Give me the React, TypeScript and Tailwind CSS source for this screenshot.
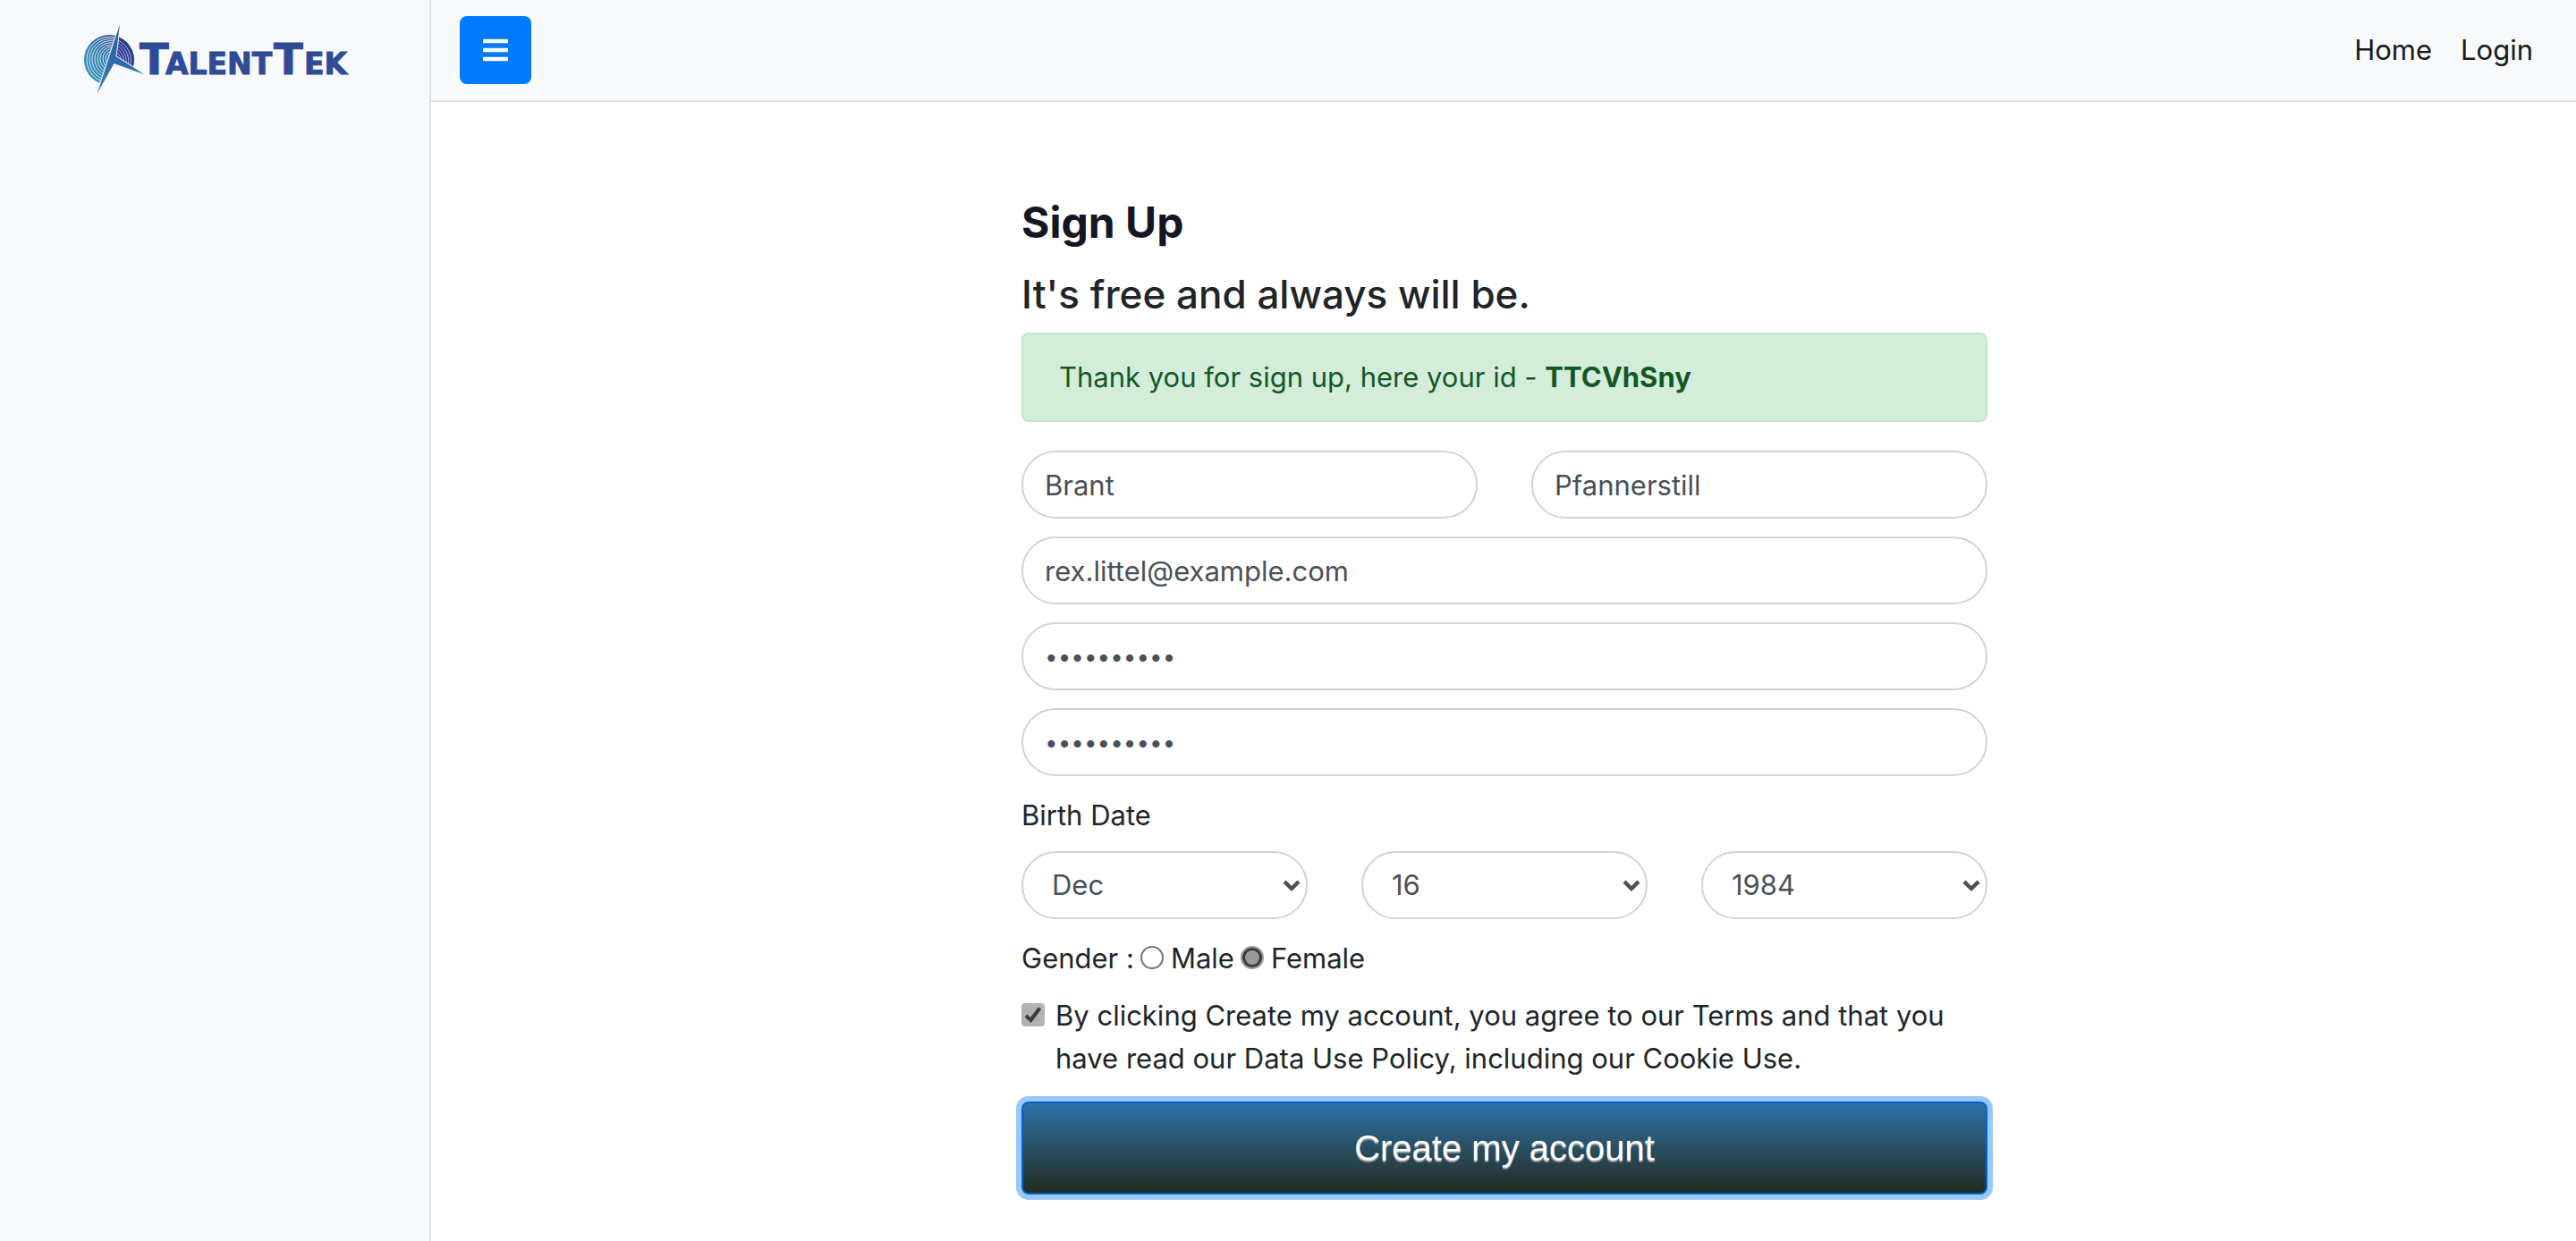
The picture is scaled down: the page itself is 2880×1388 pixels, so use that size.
import type { ReactNode } from "react";
import { FaBars } from "react-icons/fa";

const rings = Array.from({ length: 10 }, (_, i) => i + 1);

function Logo() {
  return (
    <svg viewBox="0 0 297 76" className="h-[76px] w-[297px]" role="img" aria-label="TalentTek">
      <defs>
        <linearGradient id="globe" gradientUnits="userSpaceOnUse" x1="0" y1="60" x2="52" y2="20">
          <stop offset="0" stopColor="#2f9cc0" />
          <stop offset="0.55" stopColor="#2f74ad" />
          <stop offset="1" stopColor="#2b3990" />
        </linearGradient>
        <linearGradient id="needle" gradientUnits="userSpaceOnUse" x1="14" y1="76" x2="44" y2="20">
          <stop offset="0" stopColor="#2f93bd" />
          <stop offset="0.5" stopColor="#2d6fae" />
          <stop offset="1" stopColor="#2e5fa3" />
        </linearGradient>
        <clipPath id="left">
          <path d="M0 0 H38 L29 35 L16 68 H0 Z" />
        </clipPath>
        <clipPath id="right">
          <path d="M39 0 L35 36 L56 48 H70 V0 Z" />
        </clipPath>
      </defs>
      <g clipPath="url(#left)">
        <circle cx="28" cy="39" r="28" fill="url(#globe)" />
        {rings.map((n) => (
          <circle key={n} cx={28 + n * 0.6} cy={39 - n * 0.2} r={28 - n * 2.4} fill="none" stroke="#f8f9fb" strokeOpacity="0.9" strokeWidth="1" />
        ))}
      </g>
      <g clipPath="url(#right)">
        <circle cx="28" cy="39" r="28" fill="#2b3990" />
        {rings.map((n) => (
          <circle key={n} cx={28 - n * 0.4} cy={39 + n * 0.6} r={27 - n * 2.2} fill="none" stroke="#f8f9fb" strokeOpacity="0.7" strokeWidth="0.9" />
        ))}
      </g>
      <path
        d="M40 -1 L35.500 35 L67 55 L33.5 43 L14.500 77 L28 36 Z"
        fill="url(#needle)"
        stroke="#f8f9fb"
        strokeWidth="2"
        paintOrder="stroke"
      />
      <g fill="#2f4a97" stroke="#2f4a97" strokeWidth="1" className="font-['DejaVu_Sans'] font-bold">
        <text y="55" className="text-[48px]">
          <tspan x="62">T</tspan>
          <tspan x="212">T</tspan>
        </text>
        <text y="55" className="text-[33px]">
          <tspan x="91">ALENT</tspan>
          <tspan x="246">EK</tspan>
        </text>
      </g>
    </svg>
  );
}

function Field({ label, type = "text", value }: { label: string; type?: string; value: string }) {
  return (
    <input
      className="h-[76px] w-full rounded-full border-2 border-[#ced4da] bg-white px-6 text-[31px] leading-[48px] text-[#495057] outline-none [&[type=password]]:text-[26px]"
      type={type}
      aria-label={label}
      defaultValue={value}
    />
  );
}

function Picker({ label, options, value }: { label: string; options: string[]; value: string }) {
  return (
    <div className="relative">
      <select
        aria-label={label}
        defaultValue={value}
        className="h-[76px] w-full appearance-none rounded-full border-2 border-[#ced4da] bg-white px-8 text-[31px] leading-[48px] text-[#495057] outline-none"
      >
        {options.map((o) => (
          <option key={o}>{o}</option>
        ))}
      </select>
      <svg viewBox="0 0 20 14" className="pointer-events-none absolute top-8 right-2 h-[14px] w-5" fill="none" stroke="#495057" strokeWidth="4.4">
        <path d="M2 2 L10 10 L18 2" />
      </svg>
    </div>
  );
}

function Gender({ children, checked }: { children: ReactNode; checked?: boolean }) {
  return (
    <label className="flex items-center gap-2">
      <input
        type="radio"
        name="gender"
        defaultChecked={checked}
        className="mb-0.5 size-[26px] appearance-none rounded-full border-2 border-[#767676] bg-white checked:border-[#999999] checked:bg-[#999999] checked:shadow-[inset_0_0_0_3px_#3b3b3b]"
      />
      {children}
    </label>
  );
}

const months = ["Jan", "Feb", "Mar", "Apr", "May", "Jun", "Jul", "Aug", "Sep", "Oct", "Nov", "Dec"];
const days = Array.from({ length: 31 }, (_, i) => String(i + 1));
const years = Array.from({ length: 100 }, (_, i) => String(1920 + i));

export default function App() {
  return (
    <div className="flex min-h-screen bg-white font-['Inter',sans-serif] text-[31px] leading-[48px] text-[#212529]">
      <aside className="w-[482px] shrink-0 border-r-2 border-[#dee2e6] bg-[#f8f9fb] pt-7 pl-[94px]">
        <a href="#" className="block">
          <Logo />
        </a>
      </aside>
      <div className="min-w-0 flex-1">
        <nav className="flex h-[114px] items-center justify-between border-b-2 border-[#dee2e6] bg-[#f8f9fb] pr-12 pl-8">
          <button type="button" aria-label="Toggle menu" className="flex h-[76px] w-20 items-center justify-center rounded-lg bg-[#007bff] text-[32px] text-white">
            <FaBars />
          </button>
          <div className="flex gap-8 text-[#1a1a1a]">
            <a href="#">Home</a>
            <a href="#">Login</a>
          </div>
        </nav>
        <main className="mx-auto w-full max-w-[1082px] pt-[105px] pb-12 pl-0.5">
          <h1 className="text-[48px] leading-[60px] font-bold text-[#151624]">Sign Up</h1>
          <h2 className="mt-5 text-[44px] leading-[60px] font-medium">It's free and always will be.</h2>
          <div role="alert" className="mt-[13px] rounded-lg border-2 border-[#c3e6cb] bg-[#d4edda] px-10 py-6 text-[#155724]">
            Thank you for sign up, here your id - <strong className="font-bold">TTCVhSny</strong>
          </div>
          <form className="mt-8">
            <div className="flex flex-col gap-5">
              <div className="grid grid-cols-2 gap-[60px]">
                <Field label="First name" value="Brant" />
                <Field label="Last name" value="Pfannerstill" />
              </div>
              <Field label="Email" type="email" value="rex.littel@example.com" />
              <Field label="Password" type="password" value="abcdefghij" />
              <Field label="Confirm password" type="password" value="abcdefghij" />
            </div>
            <fieldset className="mt-5">
              <legend>Birth Date</legend>
              <div className="mt-4 grid grid-cols-3 gap-[60px]">
                <Picker label="Month" options={months} value="Dec" />
                <Picker label="Day" options={days} value="16" />
                <Picker label="Year" options={years} value="1984" />
              </div>
            </fieldset>
            <div role="radiogroup" aria-label="Gender" className="mt-5 flex items-center gap-[7px]">
              <span>Gender :</span>
              <Gender>Male</Gender>
              <Gender checked>Female</Gender>
            </div>
            <label className="mt-4 flex items-start gap-3">
              <span className="relative mt-[10px] size-[26px] shrink-0">
                <input type="checkbox" defaultChecked className="block size-[26px] appearance-none rounded-sm bg-[#b2b2b2]" />
                <svg viewBox="0 0 26 26" className="pointer-events-none absolute inset-0 size-[26px]" fill="none" stroke="#3b3b3b" strokeWidth="4">
                  <path d="M5 14 L10.5 19 L20.5 5.5" />
                </svg>
              </span>
              <span>By clicking Create my account, you agree to our Terms and that you have read our Data Use Policy, including our Cookie Use.</span>
            </label>
            <button
              type="submit"
              className="mt-6 h-[104px] w-full rounded-lg border-2 border-[#0062cc] bg-linear-to-b from-[#2d72ab] to-[#212c20] font-['Liberation_Sans',sans-serif] text-[40px] text-white shadow-[0_0_0_6px_#99c8ff] [text-shadow:0_2px_1px_#999999]"
            >
              Create my account
            </button>
          </form>
        </main>
      </div>
    </div>
  );
}
